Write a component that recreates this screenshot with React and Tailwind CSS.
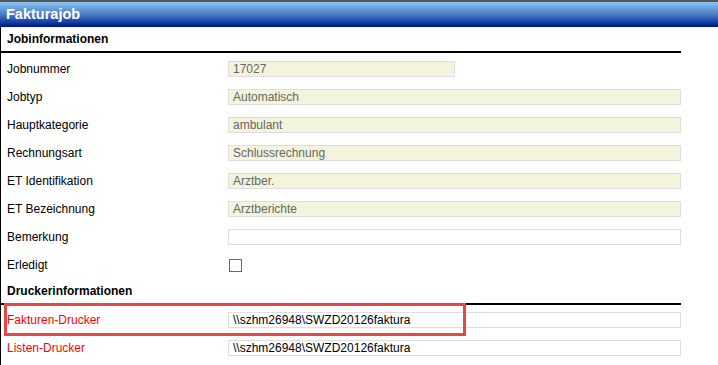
const jobFelder = [
  { label: "Jobnummer", value: "17027", narrow: true },
  { label: "Jobtyp", value: "Automatisch" },
  { label: "Hauptkategorie", value: "ambulant" },
  { label: "Rechnungsart", value: "Schlussrechnung" },
  { label: "ET Identifikation", value: "Arztber." },
  { label: "ET Bezeichnung", value: "Arztberichte" },
];

const druckerFelder = [
  { label: "Fakturen-Drucker", value: "\\\\szhm26948\\SWZD20126faktura" },
  { label: "Listen-Drucker", value: "\\\\szhm26948\\SWZD20126faktura" },
];

const Zeile = ({ label, labelClass = "text-black", children }) => (
  <div className="flex h-[28px] items-center">
    <div className={`w-[227px] pl-[6px] text-[12px] ${labelClass}`}>{label}</div>
    <div className="flex flex-1 items-center">{children}</div>
  </div>
);

const Abschnitt = ({ titel }) => (
  <div className="flex h-[26px] items-center border-b-2 border-black pl-[6px] text-[12px] font-bold text-black">
    {titel}
  </div>
);

export default function App() {
  return (
    <div
      className="relative h-[365px] w-[718px] overflow-hidden bg-white"
      style={{ fontFamily: '"Liberation Sans", Arial, sans-serif' }}
    >
      {/* Titelleiste */}
      <div className="flex h-[27px] items-center border-t-2 border-[#555] bg-gradient-to-b from-[#8ac6f0] via-[#4a7cc4] to-[#020e88] pl-[6px]">
        <span className="text-[14.5px] font-bold text-white">Fakturajob</span>
      </div>

      <div className="h-[338px] w-[681px] border-l border-black">
        <Abschnitt titel="Jobinformationen" />
        <div className="pt-[2px]">
          {jobFelder.map((f) => (
            <Zeile key={f.label} label={f.label}>
              <div
                className={`flex h-[16px] items-center border border-[#dedde4] bg-[#f4f4dc] pl-[4px] text-[12px] text-[#666] ${
                  f.narrow ? "w-[227px]" : "w-full"
                }`}
              >
                {f.value}
              </div>
            </Zeile>
          ))}
          <Zeile label="Bemerkung">
            <div className="h-[16px] w-full border border-[#dedde4] bg-white" />
          </Zeile>
          <Zeile label="Erledigt">
            <div className="ml-[1px] h-[13px] w-[13px] border border-[#666] bg-white" />
          </Zeile>
        </div>

        <Abschnitt titel="Druckerinformationen" />
        <div className="pt-[1px]">
          {druckerFelder.map((f) => (
            <Zeile key={f.label} label={f.label} labelClass="text-[#ff0000]">
              <div className="flex h-[16px] w-full items-center border border-[#dedde4] bg-white pl-[4px] text-[12px] text-black">
                {f.value}
              </div>
            </Zeile>
          ))}
        </div>
      </div>

      {/* Markierung */}
      <div className="absolute left-[4px] top-[303px] h-[33px] w-[462px] border-[3px] border-[#e24a48]" />
    </div>
  );
}
